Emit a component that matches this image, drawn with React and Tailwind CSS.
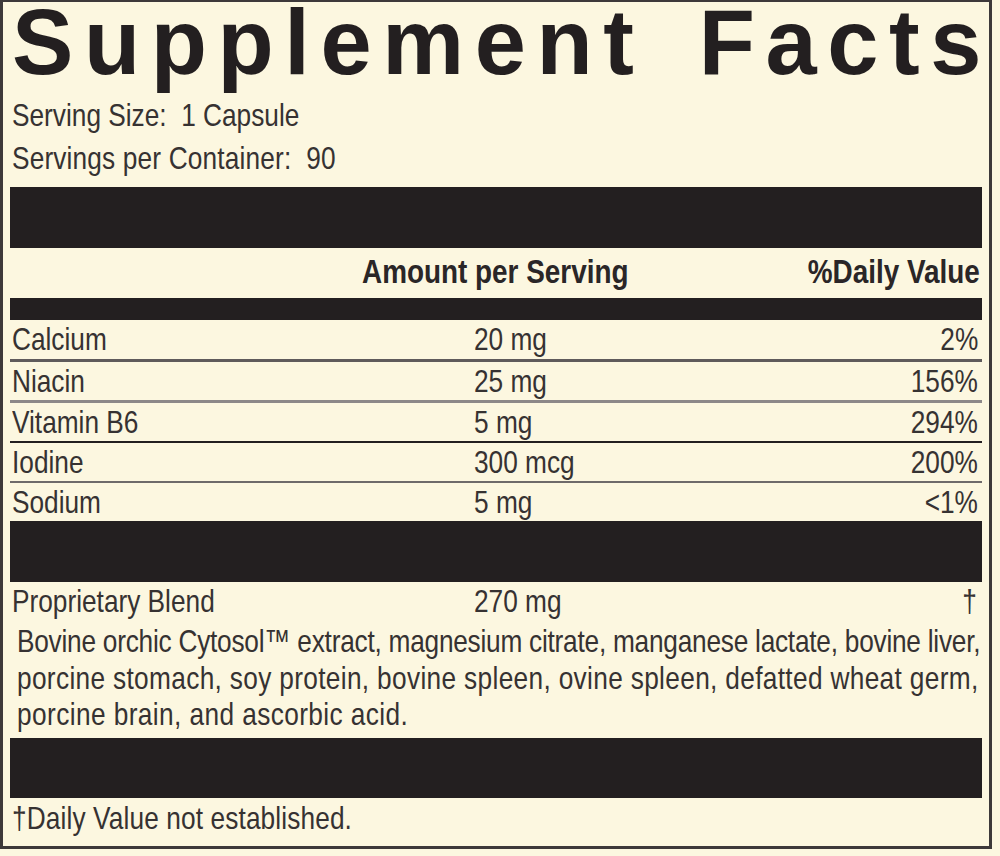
function T({ children, right = false, className = "" }) {
  return (
    <span className={`inline-block whitespace-pre scale-x-[0.82] ${right ? "origin-right" : "origin-left"} ${className}`}>
      {children}
    </span>
  );
}

export default function App() {
  const rows = [
    { n: "Calcium", a: "20 mg", p: "2%", sep: "h-[3px] bg-[#5f5b5b]" },
    { n: "Niacin", a: "25 mg", p: "156%", sep: "h-[3px] bg-[#8c8888]" },
    { n: "Vitamin B6", a: "5 mg", p: "294%", sep: "h-[2px] bg-[#231f20]" },
    { n: "Iodine", a: "300 mcg", p: "200%", sep: "h-[2px] bg-[#6e6a6a]" },
    { n: "Sodium", a: "5 mg", p: "<1%", sep: null },
  ];
  return (
    <div className="w-[1000px] h-[856px] bg-[#fcf7e0] overflow-hidden font-['Liberation_Sans',Arial,sans-serif]">
      <div className="w-[992px] h-[849px] border-x-[3px] border-t-[2px] border-b-[3px] border-[#3d393a] px-[7px] text-[#363232]">
        <div className="h-[80px] leading-[80px] text-[92px] font-bold text-[#231f20] whitespace-nowrap pl-[2px] tracking-[10.6px] [word-spacing:18px]">
          Supplement Fact<span className="tracking-normal">s</span>
        </div>
        <div className="mt-[12px] pl-[2px] text-[32px] leading-[43px]">
          <div><T>Serving Size:  1 Capsule</T></div>
          <div><T className="tracking-[0.2px]">Servings per Container:  90</T></div>
        </div>
        <div className="mt-[7px] h-[61px] bg-[#231f20]" />
        <div className="h-[50px] leading-[46px] text-[34px] font-bold text-[#2a2627] grid grid-cols-[352px_1fr_auto] pr-[2px]">
          <div />
          <div><T>Amount per Serving</T></div>
          <div><T right>%Daily Value</T></div>
        </div>
        <div className="h-[22px] bg-[#231f20]" />
        {rows.map((r, i) => (
          <div key={r.n}>
            <div className={`${i === 0 ? "h-[39px] leading-[39px]" : "h-[38px] leading-[38px]"} text-[32px] grid grid-cols-[462px_1fr_auto] pl-[2px] pr-[4px]`}>
              <div><T>{r.n}</T></div>
              <div><T>{r.a}</T></div>
              <div><T right>{r.p}</T></div>
            </div>
            {r.sep && <div className={r.sep} />}
          </div>
        ))}
        <div className="h-[61px] bg-[#231f20]" />
        <div className="h-[38px] leading-[38px] text-[32px] grid grid-cols-[462px_1fr_auto] pl-[2px] pr-[5px]">
          <div><T>Proprietary Blend</T></div>
          <div><T>270 mg</T></div>
          <div><T right>†</T></div>
        </div>
        <div className="pt-[3px] pl-[7px] text-[32px] leading-[36.5px]">
          <div><T className="tracking-[-0.29px]">Bovine orchic Cytosol™ extract, magnesium citrate, manganese lactate, bovine liver,</T></div>
          <div><T className="tracking-[0.41px]">porcine stomach, soy protein, bovine spleen, ovine spleen, defatted wheat germ,</T></div>
          <div><T className="tracking-[0.5px]">porcine brain, and ascorbic acid.</T></div>
        </div>
        <div className="mt-[5px] h-[60px] bg-[#231f20]" />
        <div className="h-[40px] leading-[40px] text-[32px] pl-[2px]"><T className="tracking-[0.15px]">†Daily Value not established.</T></div>
      </div>
    </div>
  );
}
